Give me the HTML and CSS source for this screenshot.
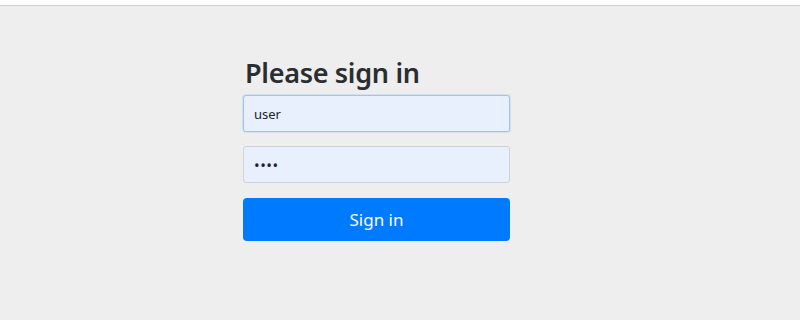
FILE: index.html
```html
<!DOCTYPE html>
<html lang="en">
<head>
<meta charset="utf-8">
<title>Please sign in</title>
<link rel="stylesheet" href="styles.css">
</head>
<body>
<div class="topbar"></div>
<main class="page">
  <form class="form-signin">
    <h2 class="heading">Please sign in</h2>
    <input class="field field-focus" type="text" value="user">
    <input class="field" type="password" value="pass">
    <button class="btn" type="button">Sign in</button>
  </form>
</main>
</body>
</html>
```
FILE: styles.css
```css
html, body {
  margin: 0;
  padding: 0;
  height: 100%;
}
body {
  background: #eeeeee;
  font-family: "Noto Sans", "Open Sans", sans-serif;
  color: #212529;
}
.topbar {
  height: 5px;
  background: #ffffff;
  border-bottom: 1px solid #d2d2d2;
}
.page {
  display: flex;
  justify-content: flex-start;
  padding-left: 243px;
  padding-top: 50px;
}
.form-signin {
  width: 267px;
  display: flex;
  flex-direction: column;
}
.heading {
  font-size: 27px;
  font-weight: 600;
  line-height: 33px;
  margin: 0 0 6px 2px;
  color: #2a2d31;
  letter-spacing: -0.3px;
}
.field {
  box-sizing: border-box;
  width: 100%;
  height: 37px;
  margin: 0 0 14px 0;
  padding: 0 10px;
  font-family: inherit;
  font-size: 13px;
  color: #212529;
  background: #e8f0fe;
  border: 1px solid #ced4da;
  border-radius: 3px;
  outline: none;
}
.field[type="password"] {
  font-size: 15px;
  letter-spacing: 0.5px;
}
.field-focus {
  border-color: #9ec5f5;
  box-shadow: 0 0 0 1px rgba(140, 185, 245, 0.25);
}
.btn {
  box-sizing: border-box;
  width: 100%;
  height: 43px;
  margin-top: 1px;
  border: none;
  border-radius: 4px;
  background: #007bff;
  color: #ffffff;
  font-family: inherit;
  font-size: 17px;
  cursor: pointer;
}
```
